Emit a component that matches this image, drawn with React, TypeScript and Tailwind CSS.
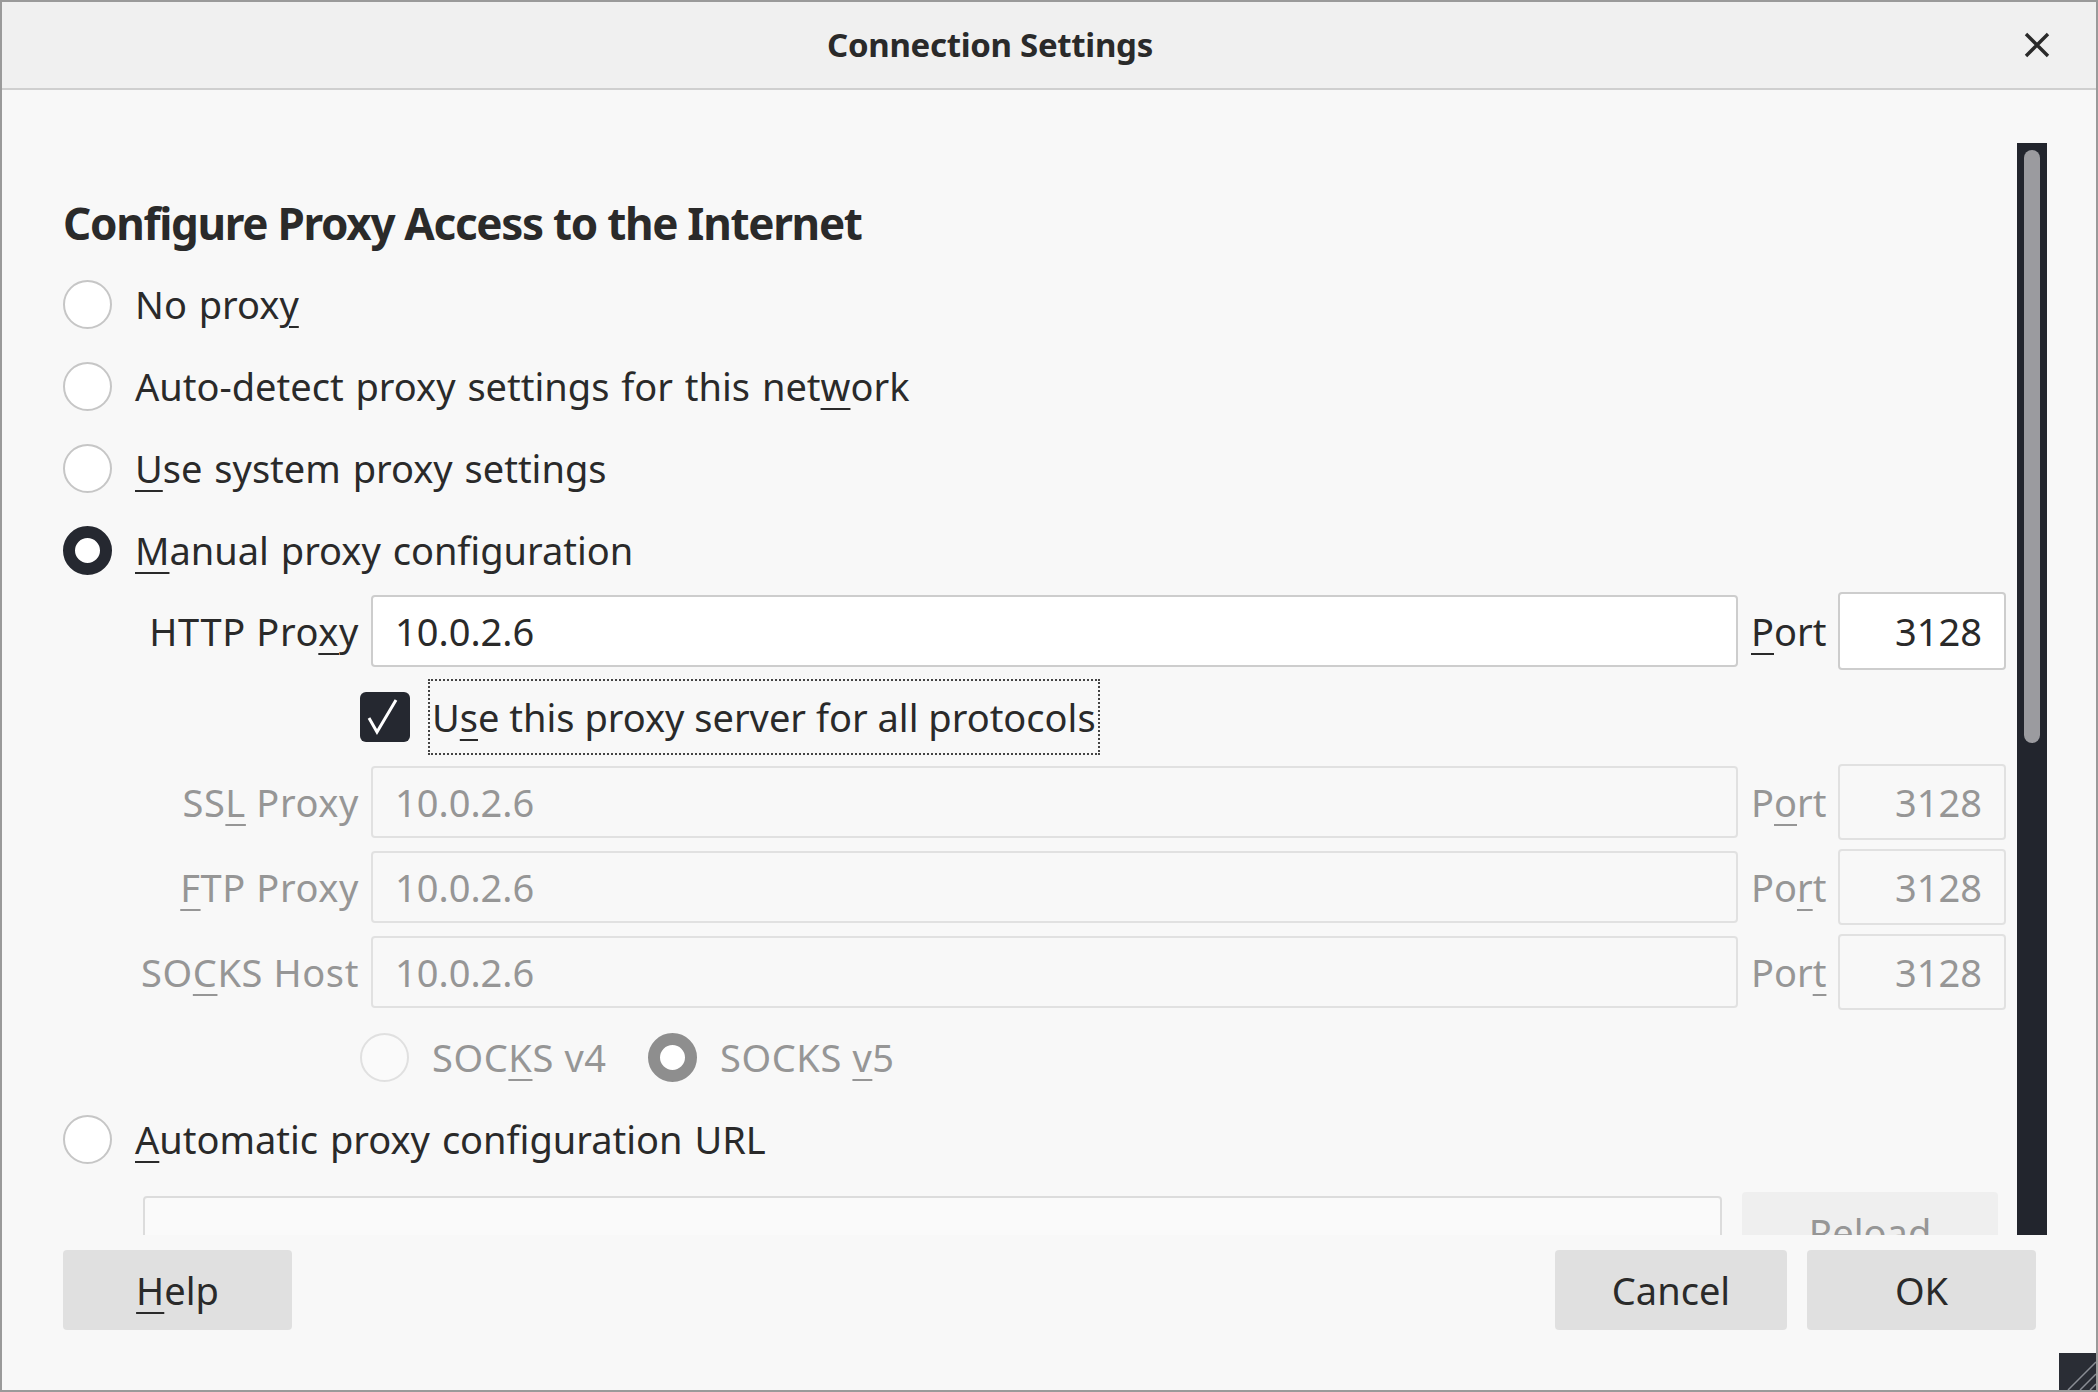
import type { ReactNode } from 'react'

const TEXT = 'text-[#2a2a2a]'
const DIM = 'text-[#969696]'

/** mnemonic letter, underlined like GTK accelerators */
function Mn({ children }: { children: ReactNode }) {
  return <span className="underline decoration-2 underline-offset-[7px]">{children}</span>
}

function Radio({ checked = false, disabled = false }: { checked?: boolean; disabled?: boolean }) {
  if (checked) {
    return (
      <span
        className={`block h-[49px] w-[49px] shrink-0 rounded-full border-[12px] bg-white ${
          disabled ? 'border-[#8e8e8e]' : 'border-[#252830]'
        }`}
      />
    )
  }
  return (
    <span
      className={`block h-[49px] w-[49px] shrink-0 rounded-full border-2 ${
        disabled ? 'border-[#e0e0e0] bg-[#fafafa]' : 'border-[#c6c6c6] bg-white'
      }`}
    />
  )
}

function RadioRow({ children, checked }: { children: ReactNode; checked?: boolean }) {
  return (
    <div className="flex h-[82px] items-center">
      <Radio checked={checked} />
      <span className={`ml-[23px] text-[38px] leading-[52px] [word-spacing:2px] ${TEXT}`}>{children}</span>
    </div>
  )
}

function ProxyRow({
  label,
  port,
  disabled = false,
}: {
  label: ReactNode
  port: ReactNode
  disabled?: boolean
}) {
  const input = disabled
    ? `border-[#e1e1e1] bg-[#f8f8f8] ${DIM}`
    : `border-[#cdcdcd] bg-white ${TEXT}`
  return (
    <div className="flex h-[78px] items-center text-[38px] leading-[52px]">
      <span
        className={`w-[296px] whitespace-nowrap text-right tracking-[0.6px] ${disabled ? DIM : TEXT}`}
      >
        {label}
      </span>
      <div className={`ml-[12px] flex h-[72px] flex-1 items-center rounded-[4px] border-2 px-[22px] ${input}`}>
        10.0.2.6
      </div>
      <span className={`ml-[13px] w-[74px] ${disabled ? DIM : TEXT}`}>{port}</span>
      <div
        className={`ml-[13px] flex w-[168px] items-center justify-end rounded-[4px] border-2 px-[22px] ${input} ${
          disabled ? 'h-[76px]' : 'h-[78px]'
        }`}
      >
        3128
      </div>
    </div>
  )
}

export default function App() {
  return (
    <div className="relative flex h-[1392px] w-[2098px] flex-col overflow-hidden border-2 border-[#9a9a9a] bg-[#f8f8f8] font-['Noto_Sans',sans-serif]">
      {/* title bar */}
      <header className="flex h-[88px] shrink-0 items-center border-b-2 border-[#cfcfcf] bg-[#f0f0f0]">
        <div className={`flex-1 pr-[46px] text-center text-[33px] font-bold leading-[44px] tracking-[-0.3px] ${TEXT}`}>
          Connection Settings
        </div>
        <svg width="26" height="26" viewBox="0 0 26 26" className="mr-[46px]" stroke="#2a2a2a" strokeWidth="3.4">
          <path d="M2 2 L24 24 M24 2 L2 24" />
        </svg>
      </header>

      {/* scrolling content */}
      <div className="flex h-[1145px] shrink-0">
        <div className="flex-1 overflow-hidden pl-[61px] pr-[11px] pt-[103px]">
          <h1 className={`text-[44px] font-bold leading-[60px] tracking-[-1.3px] ${TEXT}`}>
            Configure Proxy Access to the Internet
          </h1>

          <div className="mt-[10px]">
            <RadioRow>
              No prox<Mn>y</Mn>
            </RadioRow>
            <RadioRow>
              Auto-detect proxy settings for this net<Mn>w</Mn>ork
            </RadioRow>
            <RadioRow>
              <Mn>U</Mn>se system proxy settings
            </RadioRow>
            <RadioRow checked>
              <Mn>M</Mn>anual proxy configuration
            </RadioRow>
          </div>

          <div className="mt-[1px]">
            <ProxyRow
              label={
                <>
                  HTTP Pro<Mn>x</Mn>y
                </>
              }
              port={
                <>
                  <Mn>P</Mn>ort
                </>
              }
            />

            <div className="mt-[9px] flex h-[76px] items-center pl-[297px]">
              <span className="flex h-[50px] w-[50px] shrink-0 rounded-[6px] bg-[#252830]">
                <svg width="50" height="50" viewBox="0 0 50 50" fill="none" stroke="#fff" strokeWidth="3">
                  <path d="M9 26 L17 40 L36 8" />
                </svg>
              </span>
              <span
                className={`ml-[18px] flex h-[76px] items-center border-2 border-dotted border-[#444] px-[2px] text-[38px] leading-[52px] ${TEXT}`}
              >
                U<Mn>s</Mn>e this proxy server for all protocols
              </span>
            </div>

            <div className="mt-[8px] flex flex-col gap-[7px]">
              <ProxyRow
                disabled
                label={
                  <>
                    SS<Mn>L</Mn> Proxy
                  </>
                }
                port={
                  <>
                    P<Mn>o</Mn>rt
                  </>
                }
              />
              <ProxyRow
                disabled
                label={
                  <>
                    <Mn>F</Mn>TP Proxy
                  </>
                }
                port={
                  <>
                    Po<Mn>r</Mn>t
                  </>
                }
              />
              <ProxyRow
                disabled
                label={
                  <>
                    SO<Mn>C</Mn>KS Host
                  </>
                }
                port={
                  <>
                    Por<Mn>t</Mn>
                  </>
                }
              />
            </div>

            <div className={`mt-[8px] flex h-[76px] items-center pl-[297px] text-[38px] leading-[52px] ${DIM}`}>
              <Radio disabled />
              <span className="ml-[23px] w-[183px] tracking-[0.6px]">
                SOC<Mn>K</Mn>S v4
              </span>
              <span className="ml-[33px] flex">
                <Radio checked disabled />
              </span>
              <span className="ml-[23px] tracking-[0.6px]">
                SOCKS <Mn>v</Mn>5
              </span>
            </div>
          </div>

          <div className="mt-[3px]">
            <RadioRow>
              <Mn>A</Mn>utomatic proxy configuration URL
            </RadioRow>
          </div>

          <div className="mt-[12px] flex items-start pl-[80px] pr-[8px]">
            <div className="mt-[4px] h-[72px] flex-1 rounded-[4px] border-2 border-[#dcdcdc] bg-[#fafafa]" />
            <div className={`ml-[20px] flex h-[80px] w-[256px] items-center justify-center rounded-[4px] bg-[#efefef] text-[38px] ${DIM}`}>
              Reload
            </div>
          </div>
        </div>

        {/* scrollbar */}
        <div className="mr-[49px] w-[30px] shrink-0 pt-[53px]">
          <div className="h-full bg-[#22252d] px-[7px] pt-[7px]">
            <div className="h-[593px] rounded-full bg-[#9b9b9f]" />
          </div>
        </div>
      </div>

      {/* footer buttons */}
      <footer className="flex h-[155px] shrink-0 items-start pl-[61px] pr-[60px] pt-[15px] text-[38px] leading-[52px]">
        <button className={`flex h-[80px] w-[229px] items-center justify-center rounded-[4px] bg-[#e0e0e0] ${TEXT}`}>
          <Mn>H</Mn>elp
        </button>
        <div className="flex-1" />
        <button className={`flex h-[80px] w-[232px] items-center justify-center rounded-[4px] bg-[#e0e0e0] ${TEXT}`}>
          Cancel
        </button>
        <button className={`ml-[20px] flex h-[80px] w-[229px] items-center justify-center rounded-[4px] bg-[#e0e0e0] ${TEXT}`}>
          OK
        </button>
      </footer>

      {/* resize grip */}
      <svg width="37" height="37" viewBox="0 0 37 37" className="absolute bottom-0 right-0">
        <rect width="37" height="37" fill="#2a2d35" />
        <path d="M37 9 L9 37 M37 21 L21 37 M37 31 L31 37" stroke="#8a8d94" strokeWidth="1.5" />
      </svg>
    </div>
  )
}
